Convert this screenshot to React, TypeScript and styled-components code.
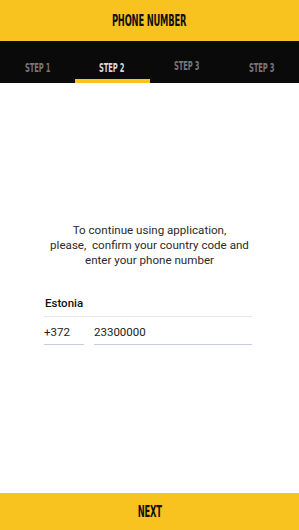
import * as React from "react";
import styled, { createGlobalStyle } from "styled-components";

const Global = createGlobalStyle`
    html, body {
        margin: 0;
        padding: 0;
        background: #fff;
    }
    #root {
        height: 530px;
    }
`;

const YELLOW = "#f8c21f";

const Screen = styled.div`
    width: 299px;
    height: 530px;
    display: flex;
    flex-direction: column;
    font-family: Roboto, "Liberation Sans", sans-serif;
`;

const Header = styled.header`
    height: 41px;
    background: ${YELLOW};
    display: flex;
    align-items: center;
    justify-content: center;
`;

const Condensed = styled.span<{size:number,color:string,squeeze?:number}>`
    display: inline-block;
    font-family: "DejaVu Sans Condensed", "DejaVu Sans", sans-serif;
    font-weight: bold;
    font-size: ${props=>props.size}px;
    color: ${props=>props.color};
    text-transform: uppercase;
    letter-spacing: -0.3px;
    transform: scaleX(${props=>props.squeeze ?? 0.58});
    white-space: nowrap;
`;

const Tabs = styled.nav`
    height: 42px;
    background: #0a0a0a;
    display: grid;
    grid-template-columns: repeat(4, 1fr);
`;

const Tab = styled.div<{active:boolean,raise?:boolean}>`
    position: relative;
    display: flex;
    align-items: center;
    justify-content: center;
    padding-top: ${props=>props.raise ? 6 : 10}px;
    box-sizing: border-box;
    &::after{
        content: "";
        position: absolute;
        left: 0;
        right: 0;
        bottom: 0;
        height: 4px;
        background: ${props=>props.active ? YELLOW : "transparent"};
    }
`;

const Body = styled.main`
    flex: 1;
    display: flex;
    flex-direction: column;
    align-items: center;
    padding-top: 140px;
`;

const Intro = styled.p`
    margin: 0;
    width: 240px;
    text-align: center;
    font-size: 11.6px;
    line-height: 15px;
    color: #2a2a2a;
    white-space: nowrap;
`;

const Form = styled.div`
    width: 208px;
    margin-top: 28px;
    margin-left: -3px;
    display: flex;
    flex-direction: column;
`;

const Country = styled.div`
    font-size: 11.5px;
    line-height: 14px;
    font-weight: 500;
    color: #111;
    padding: 0 0 6px 1px;
    border-bottom: 1px solid #e6e6e6;
`;

const PhoneRow = styled.div`
    display: flex;
    gap: 10px;
    margin-top: 8px;
`;

const Field = styled.div<{grow?:boolean,w?:number}>`
    flex: ${props=>props.grow ? 1 : "none"};
    width: ${props=>props.w ? props.w+"px" : "auto"};
    font-size: 11.5px;
    line-height: 14px;
    color: #222;
    padding-bottom: 5px;
    border-bottom: 1px solid #c9cde3;
`;

const Footer = styled.footer`
    height: 37px;
    background: ${YELLOW};
    display: flex;
    align-items: center;
    justify-content: center;
`;

const steps = [
    {label:"Step 1"},
    {label:"Step 2",active:true},
    {label:"Step 3",raise:true},
    {label:"Step 3"},
];

export default function App(){
    return(
        <Screen>
            <Global />
            <Header>
                <Condensed size={16} color="#111">Phone number</Condensed>
            </Header>
            <Tabs>
                {steps.map((s,i)=>(
                    <Tab key={i} active={!!s.active} raise={s.raise}>
                        <Condensed size={13} color={s.active ? "#d8d8d8" : "#777"}>{s.label}</Condensed>
                    </Tab>
                ))}
            </Tabs>
            <Body>
                <Intro>
                    To continue using application,<br/>
                    please,&nbsp; confirm your country code and<br/>
                    enter your phone number
                </Intro>
                <Form>
                    <Country>Estonia</Country>
                    <PhoneRow>
                        <Field w={40}>+372</Field>
                        <Field grow>23300000</Field>
                    </PhoneRow>
                </Form>
            </Body>
            <Footer>
                <Condensed size={16} color="#111">Next</Condensed>
            </Footer>
        </Screen>
    )
}
